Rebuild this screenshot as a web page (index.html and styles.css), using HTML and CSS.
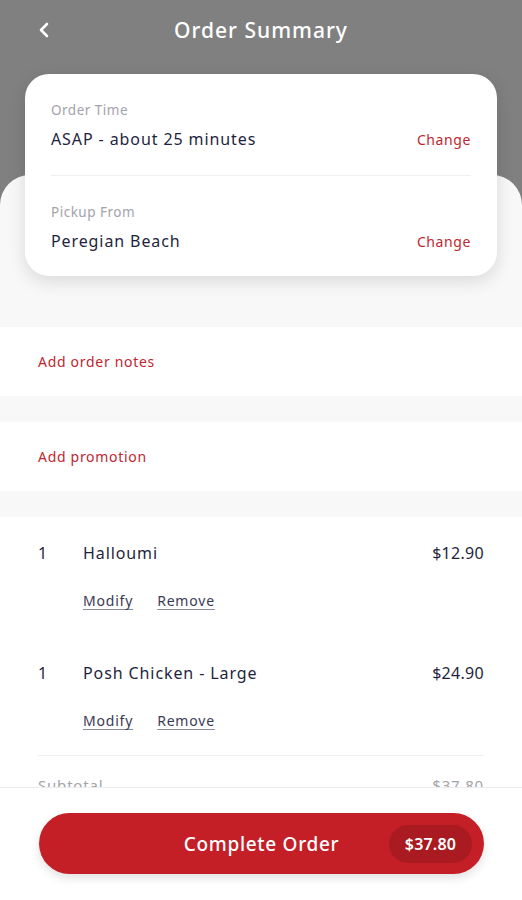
FILE: index.html
```html
<!DOCTYPE html>
<html>
<head>
<meta charset="utf-8">
<link rel="stylesheet" href="styles.css">
</head>
<body>
<div class="screen">
  <header class="top">
    <div class="titlebar">
      <svg class="back" width="14" height="16" viewBox="0 0 14 16"><path d="M10 2 L4 8 L10 14" fill="none" stroke="#fff" stroke-width="2.6" stroke-linecap="round" stroke-linejoin="round"/></svg>
      <h1 class="title">Order Summary</h1>
    </div>
    <div class="card">
      <div class="card-sec">
        <div class="label">Order Time</div>
        <div class="row">
          <span class="value">ASAP - about 25 minutes</span>
          <span class="change">Change</span>
        </div>
      </div>
      <div class="card-sec">
        <div class="label">Pickup From</div>
        <div class="row">
          <span class="value">Peregian Beach</span>
          <span class="change">Change</span>
        </div>
      </div>
    </div>
  </header>
  <main class="panel">
    <div class="spacer"></div>
    <div class="link-sec">Add order notes</div>
    <div class="gap"></div>
    <div class="link-sec">Add promotion</div>
    <div class="gap"></div>
    <div class="items">
      <div class="item">
        <div class="item-row">
          <span class="qty">1</span>
          <span class="name">Halloumi</span>
          <span class="price">$12.90</span>
        </div>
        <div class="actions"><span class="act">Modify</span><span class="act">Remove</span></div>
      </div>
      <div class="item">
        <div class="item-row">
          <span class="qty">1</span>
          <span class="name">Posh Chicken - Large</span>
          <span class="price">$24.90</span>
        </div>
        <div class="actions"><span class="act">Modify</span><span class="act">Remove</span></div>
      </div>
      <div class="divider"></div>
      <div class="sub-row"><span>Subtotal</span><span>$37.80</span></div>
    </div>
  </main>
  <footer class="bottom">
    <button class="cta"><span class="cta-text">Complete Order</span><span class="cta-price">$37.80</span></button>
  </footer>
</div>
</body>
</html>
```
FILE: styles.css
```css
* { box-sizing: border-box; }
html, body { margin: 0; padding: 0; }
body {
  font-family: "Noto Sans", "Open Sans", sans-serif;
  background: #ffffff;
  color: #1f1f40;
  width: 522px;
  height: 900px;
  overflow: hidden;
}
.screen { background: #808080; height: 900px; overflow: hidden; }
.top { padding: 0 25px; }
.titlebar {
  height: 60px;
  display: flex;
  align-items: center;
  justify-content: center;
  position: relative;
}
.back { position: absolute; left: 12px; top: 22px; }
.title {
  margin: 0;
  font-size: 21px;
  font-weight: 500;
  color: #ffffff;
  letter-spacing: 1px;
}
.card {
  margin-top: 14px;
  margin-bottom: -101px;
  position: relative;
  z-index: 1;
  background: #fff;
  border-radius: 24px;
  box-shadow: 0 5px 18px rgba(0,0,0,0.13);
  padding: 0 26px;
}
.card-sec { height: 101px; padding-top: 26px; }
.card-sec + .card-sec { border-top: 1px solid #efefef; }
.label { font-size: 13.5px; line-height: 20px; color: #a3a3ab; letter-spacing: 0.5px; }
.row {
  margin-top: 8px;
  display: flex;
  justify-content: space-between;
  align-items: flex-end;
}
.value { font-size: 16px; line-height: 22px; color: #1f1f40; letter-spacing: 0.9px; }
.change { font-size: 14px; line-height: 20px; color: #c0262e; letter-spacing: 0.6px; }
.panel {
  background: #f8f8f8;
  border-radius: 30px 30px 0 0;
}
.spacer { height: 152px; }
.link-sec {
  background: #fff;
  height: 69px;
  display: flex;
  align-items: center;
  padding-left: 38px;
  font-size: 14px;
  color: #c0262e;
  letter-spacing: 0.7px;
}
.gap { height: 26px; }
.items { background: #fff; padding: 0 38px 40px; }
.item { height: 120px; padding-top: 25px; }
.item-row { display: flex; font-size: 16px; line-height: 22px; color: #1f1f40; letter-spacing: 0.9px; }
.qty { width: 45px; }
.name { flex: 1; }
.price { letter-spacing: 0.3px; }
.actions { margin-top: 27px; margin-left: 45px; display: flex; gap: 24px; }
.act {
  font-size: 14px;
  line-height: 20px;
  color: #3a3a55;
  letter-spacing: 0.8px;
  text-decoration: underline;
  text-decoration-color: #8a8a9a;
  text-underline-offset: 3px;
}
.divider { height: 1px; background: #efefef; margin-top: -2px; }
.sub-row {
  display: flex;
  justify-content: space-between;
  font-size: 15px;
  line-height: 22px;
  color: #a3a3ab;
  margin-top: 18px;
  letter-spacing: 0.8px;
}
.bottom {
  position: fixed;
  left: 0;
  right: 0;
  bottom: 0;
  height: 113px;
  background: #fff;
  border-top: 1px solid #ececec;
  padding: 25px 38px 0 39px;
  z-index: 5;
}
.cta {
  width: 100%;
  height: 61px;
  border: none;
  border-radius: 31px;
  background: #c41f27;
  box-shadow: 0 4px 10px rgba(0,0,0,0.12);
  position: relative;
  display: flex;
  align-items: center;
  justify-content: center;
  font-family: inherit;
  padding: 0;
}
.cta-text { color: #fff; font-size: 19px; font-weight: 500; letter-spacing: 0.7px; }
.cta-price {
  position: absolute;
  right: 12px;
  top: 12px;
  height: 38px;
  width: 83px;
  border-radius: 19px;
  background: #a91a21;
  color: #fff;
  font-size: 16px;
  font-weight: 600;
  letter-spacing: 0.2px;
  display: flex;
  align-items: center;
  justify-content: center;
}
```
